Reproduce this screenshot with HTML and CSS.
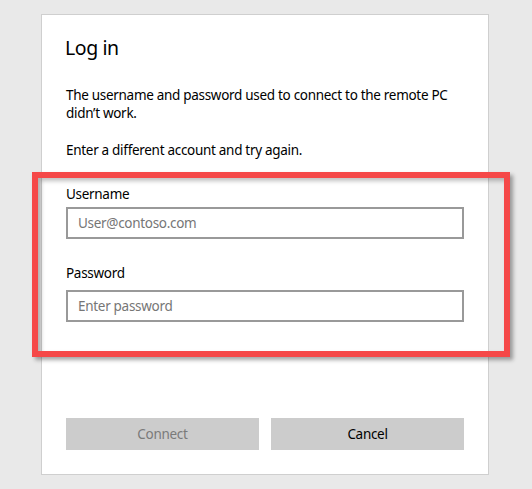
FILE: index.html
```html
<!DOCTYPE html>
<html>
<head>
<meta charset="utf-8">
<link rel="stylesheet" href="styles.css">
</head>
<body>
<div class="page">
  <div class="dialog">
    <h1 class="title">Log in</h1>
    <p class="msg msg1">The username and password used to connect to the remote PC didn’t work.</p>
    <p class="msg msg2">Enter a different account and try again.</p>
    <div class="fields">
      <label class="label">Username</label>
      <div class="input input1"><span class="ph">User@contoso.com</span></div>
      <label class="label label2">Password</label>
      <div class="input input2"><span class="ph">Enter password</span></div>
    </div>
    <div class="buttons">
      <div class="btn disabled">Connect</div>
      <div class="btn">Cancel</div>
    </div>
    <div class="highlight"></div>
  </div>
</div>
</body>
</html>
```
FILE: styles.css
```css
html, body {
  margin: 0;
  padding: 0;
  background: #e9e9e9;
  width: 532px;
  height: 489px;
  overflow: hidden;
}
body {
  font-family: "Segoe UI", "Noto Sans", sans-serif;
  color: #000;
}
.page {
  padding: 14px 0 0 41px;
}
.dialog {
  position: relative;
  box-sizing: border-box;
  width: 448px;
  height: 461px;
  background: #fff;
  border: 1px solid #cfcfcf;
  padding: 19px 24px 0 24px;
}
.title {
  margin: 0 0 0 -1px;
  font-size: 19.5px;
  font-weight: 400;
  line-height: 28px;
  letter-spacing: -0.4px;
}
.msg {
  margin: 0;
  font-size: 13.5px;
  line-height: 18px;
  letter-spacing: -0.3px;
}
.msg1 {
  margin-top: 24px;
}
.msg2 {
  margin-top: 19px;
}
.fields {
  margin-top: 26px;
}
.label {
  display: block;
  font-size: 13.5px;
  line-height: 18px;
  letter-spacing: -0.3px;
}
.label2 {
  margin-top: 25px;
}
.input {
  box-sizing: border-box;
  width: 398px;
  height: 32px;
  border: 2px solid #999;
  padding: 0 10px;
  display: flex;
  align-items: center;
  font-size: 13.5px;
  letter-spacing: -0.3px;
}
.input1 {
  margin-top: 4px;
}
.input2 {
  margin-top: 8px;
}
.ph {
  color: #767676;
}
.buttons {
  display: flex;
  gap: 12px;
  margin-top: 96px;
}
.btn {
  width: 193px;
  height: 32px;
  background: #cccccc;
  display: flex;
  align-items: center;
  justify-content: center;
  font-size: 13.5px;
  letter-spacing: -0.3px;
  color: #000;
}
.btn.disabled {
  color: #7a7a7a;
}
.highlight {
  position: absolute;
  left: -10px;
  top: 157px;
  width: 466px;
  height: 173px;
  border: 6px solid #f54848;
  box-shadow: 3px 3px 4px rgba(0,0,0,0.35), inset 3px 3px 4px rgba(0,0,0,0.25);
}
```
